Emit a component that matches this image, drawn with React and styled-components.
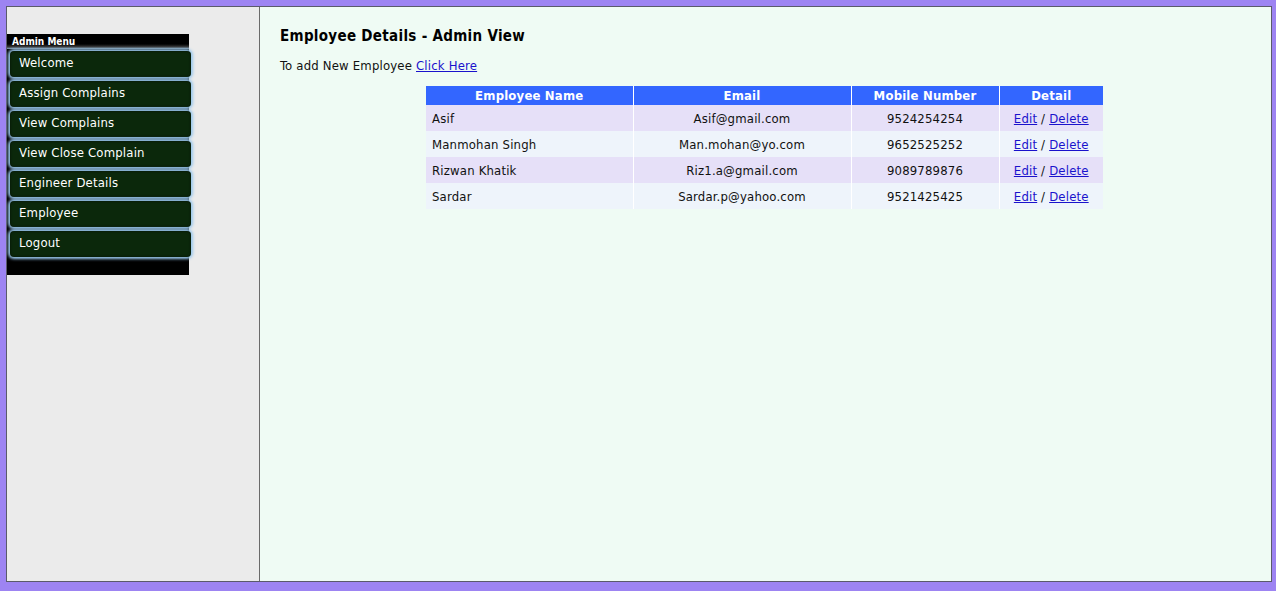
import React from "react";
import styled, { createGlobalStyle } from "styled-components";

const Global = createGlobalStyle`
  html, body { margin: 0; padding: 0; background: #9d84f2; }
  body {
    font-family: "DejaVu Sans Condensed", "DejaVu Sans", Tahoma, sans-serif;
    font-size: 13px;
    letter-spacing: 0.18px;
    color: #111;
  }
`;

const Page = styled.div`
  padding: 6px 4px 9px 6px;
`;

const Frame = styled.div`
  display: flex;
  height: 574px;
  border: 1px solid #5a5a6a;
`;

const Sidebar = styled.aside`
  width: 252px;
  flex: none;
  background: #ebebeb;
  border-right: 1px solid #6a6a6a;
  padding-top: 27px;
`;

const MenuBox = styled.div`
  width: 182px;
  background: #000;
  padding-bottom: 18px;
`;

const MenuTitle = styled.div`
  height: 15px;
  line-height: 16px;
  padding-left: 5px;
  color: #fff;
  font-size: 10px;
  font-weight: bold;
  letter-spacing: 0;
  background: linear-gradient(#000 0, #000 10px, #3a3a3a 13px, #8aa8c0 15px);
`;

const MenuList = styled.nav`
  display: flex;
  flex-direction: column;
  gap: 4px;
  padding-top: 2px;
  padding-left: 3px;
`;

const MenuButton = styled.a`
  display: block;
  height: 26px;
  padding-left: 9px;
  line-height: 23px;
  box-sizing: content-box;
  width: 172px;
  color: #fff;
  text-decoration: none;
  background: #0b280b;
  border-radius: 4px;
  box-shadow: 0 0 3px 2px #9ac8ec, inset 0 0 3px rgba(0, 0, 0, 0.6);
`;

const Content = styled.main`
  flex: 1;
  background: #effbf4;
  padding: 20px 20px;
`;

const Heading = styled.h1`
  margin: 0;
  font-size: 15px;
  font-weight: bold;
  letter-spacing: 0.3px;
  color: #000;
`;

const Intro = styled.p`
  margin: 13px 0 13px;
  font-size: 13px;
`;

const Link = styled.a`
  color: #1a12cc;
  text-decoration: underline;
`;

const Table = styled.table`
  margin-left: 146px;
  border-collapse: collapse;
  font-size: 13px;
`;

const Th = styled.th`
  background: #3366ff;
  color: #fff;
  font-weight: bold;
  height: 19px;
  padding: 0;
  line-height: 18px;
  border-left: 1px solid #fff;
  &:first-child { border-left: none; }
`;

const Tr = styled.tr`
  background: ${(p) => (p.$alt ? "#eef4fb" : "#e6e0f8")};
`;

const Td = styled.td`
  height: 26px;
  padding: 0 6px;
  text-align: ${(p) => p.$align || "center"};
  border-left: 1px solid #fff;
  &:first-child { border-left: none; }
`;

const rows = [
  ["Asif", "Asif@gmail.com", "9524254254"],
  ["Manmohan Singh", "Man.mohan@yo.com", "9652525252"],
  ["Rizwan Khatik", "Riz1.a@gmail.com", "9089789876"],
  ["Sardar", "Sardar.p@yahoo.com", "9521425425"],
];

const menu = [
  "Welcome",
  "Assign Complains",
  "View Complains",
  "View Close Complain",
  "Engineer Details",
  "Employee",
  "Logout",
];

export default function App() {
  return (
    <Page>
      <Global />
      <Frame>
        <Sidebar>
          <MenuBox>
            <MenuTitle>Admin Menu</MenuTitle>
            <MenuList>
              {menu.map((m) => (
                <MenuButton key={m} href="#">{m}</MenuButton>
              ))}
            </MenuList>
          </MenuBox>
        </Sidebar>
        <Content>
          <Heading>Employee Details - Admin View</Heading>
          <Intro>
            To add New Employee <Link href="#">Click Here</Link>
          </Intro>
          <Table>
            <colgroup>
              <col style={{ width: 207 }} />
              <col style={{ width: 218 }} />
              <col style={{ width: 148 }} />
              <col style={{ width: 104 }} />
            </colgroup>
            <thead>
              <tr>
                <Th>Employee Name</Th>
                <Th>Email</Th>
                <Th>Mobile Number</Th>
                <Th>Detail</Th>
              </tr>
            </thead>
            <tbody>
              {rows.map((r, i) => (
                <Tr key={r[0]} $alt={i % 2 === 1}>
                  <Td $align="left">{r[0]}</Td>
                  <Td>{r[1]}</Td>
                  <Td>{r[2]}</Td>
                  <Td>
                    <Link href="#">Edit</Link> / <Link href="#">Delete</Link>
                  </Td>
                </Tr>
              ))}
            </tbody>
          </Table>
        </Content>
      </Frame>
    </Page>
  );
}
